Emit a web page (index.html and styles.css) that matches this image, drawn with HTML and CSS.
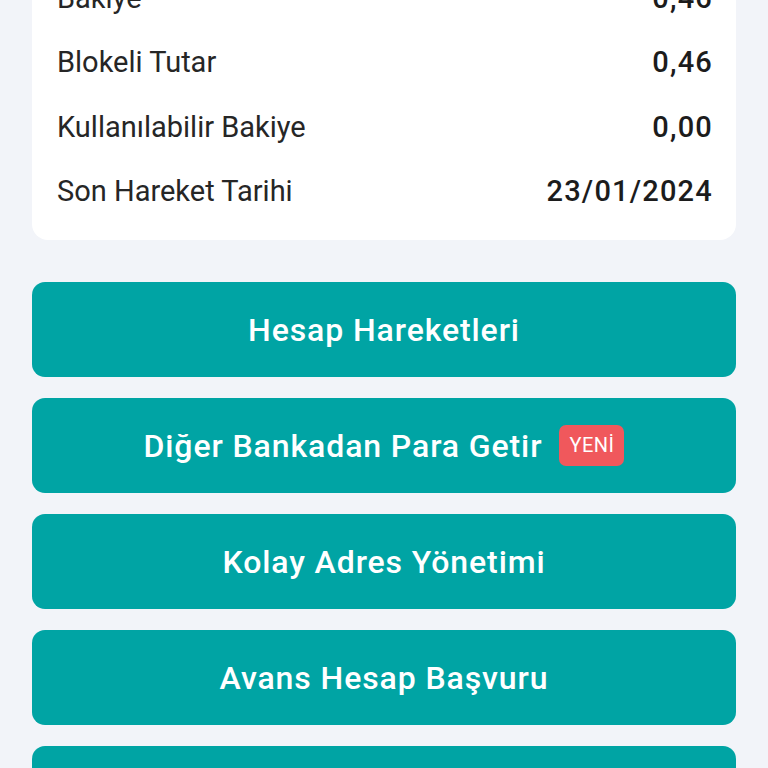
FILE: index.html
```html
<!DOCTYPE html>
<html lang="tr">
<head>
    <meta charset="UTF-8">
    <meta name="viewport" content="width=device-width, initial-scale=1.0">
    <title>Hesap Detayı</title>
    <link rel="stylesheet" href="styles.css">
</head>
<body>
    <div class="container">
        <div class="info-card">
            <div class="info-row">
                <span class="label">Bakiye</span>
                <span class="value">0,46</span>
            </div>
            <div class="info-row">
                <span class="label">Blokeli Tutar</span>
                <span class="value">0,46</span>
            </div>
            <div class="info-row">
                <span class="label">Kullanılabilir Bakiye</span>
                <span class="value">0,00</span>
            </div>
            <div class="info-row">
                <span class="label">Son Hareket Tarihi</span>
                <span class="value">23/01/2024</span>
            </div>
        </div>

        <div class="actions">
            <button class="action-btn">Hesap Hareketleri</button>
            <button class="action-btn">Diğer Bankadan Para Getir <span class="badge">YENİ</span></button>
            <button class="action-btn">Kolay Adres Yönetimi</button>
            <button class="action-btn">Avans Hesap Başvuru</button>
            <button class="action-btn">Hesap Bilgileri</button>
        </div>
    </div>
</body>
</html>
```

FILE: styles.css
```css
* {
    margin: 0;
    padding: 0;
    box-sizing: border-box;
    font-family: 'Roboto', 'Liberation Sans', sans-serif;
}
body {
    background-color: #f2f4f9;
    overflow: hidden;
}
.container {
    padding: 0 32px;
}
.info-card {
    background-color: white;
    border-radius: 16px;
    margin-top: -50px;
    padding: 16px 24px 17px 25px;
}
.info-row {
    display: flex;
    justify-content: space-between;
    align-items: center;
    height: 64.3px;
    font-size: 29px;
}
.label {
    color: #262626;
}
.value {
    color: #1c1c1c;
    font-weight: 500;
    letter-spacing: 1.2px;
    margin-right: -1px;
}
.actions {
    display: flex;
    flex-direction: column;
    gap: 21px;
    margin-top: 42px;
}
.action-btn {
    display: flex;
    justify-content: center;
    align-items: center;
    gap: 17px;
    height: 95px;
    border: none;
    border-radius: 13px;
    background-color: #00a4a4;
    color: white;
    font-size: 32px;
    font-weight: 500;
    letter-spacing: 0.9px;
}
.badge {
    background-color: #f0585c;
    color: white;
    font-size: 20px;
    font-weight: 400;
    letter-spacing: 0.5px;
    padding: 8px 10px;
    border-radius: 7px;
    line-height: 25px;
}
```
